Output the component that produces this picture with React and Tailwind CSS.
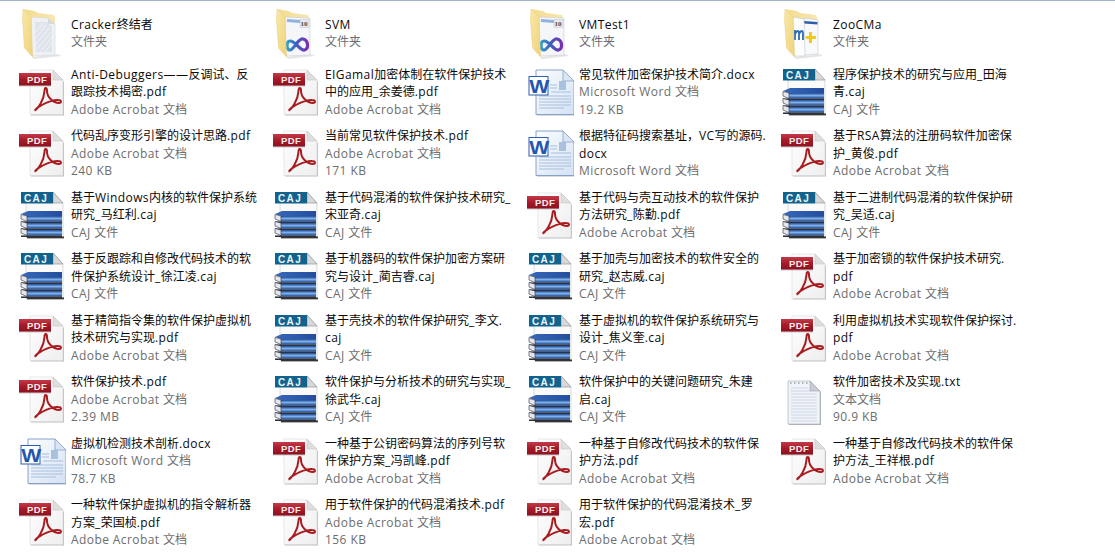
const PDF = "Adobe Acrobat 文档";
const CAJ = "CAJ 文件";
const WORD = "Microsoft Word 文档";

const rows = [
  [
    { icon: "folderPlain", name: ["Cracker终结者"], sub: ["文件夹"] },
    { icon: "folderVs", name: ["SVM"], sub: ["文件夹"] },
    { icon: "folderVs", name: ["VMTest1"], sub: ["文件夹"] },
    { icon: "folderZoo", name: ["ZooCMa"], sub: ["文件夹"] },
  ],
  [
    { icon: "pdf", name: ["Anti-Debuggers——反调试、反", "跟踪技术揭密.pdf"], sub: [PDF] },
    { icon: "pdf", name: ["EIGamal加密体制在软件保护技术", "中的应用_余姜德.pdf"], sub: [PDF] },
    { icon: "word", name: ["常见软件加密保护技术简介.docx"], sub: [WORD, "19.2 KB"] },
    { icon: "caj", name: ["程序保护技术的研究与应用_田海", "青.caj"], sub: [CAJ] },
  ],
  [
    { icon: "pdf", name: ["代码乱序变形引擎的设计思路.pdf"], sub: [PDF, "240 KB"] },
    { icon: "pdf", name: ["当前常见软件保护技术.pdf"], sub: [PDF, "171 KB"] },
    { icon: "word", name: ["根据特征码搜索基址，VC写的源码.", "docx"], sub: [WORD] },
    { icon: "pdf", name: ["基于RSA算法的注册码软件加密保", "护_黄俊.pdf"], sub: [PDF] },
  ],
  [
    { icon: "caj", name: ["基于Windows内核的软件保护系统", "研究_马红利.caj"], sub: [CAJ] },
    { icon: "caj", name: ["基于代码混淆的软件保护技术研究_", "宋亚奇.caj"], sub: [CAJ] },
    { icon: "pdf", name: ["基于代码与壳互动技术的软件保护", "方法研究_陈勤.pdf"], sub: [PDF] },
    { icon: "caj", name: ["基于二进制代码混淆的软件保护研", "究_吴适.caj"], sub: [CAJ] },
  ],
  [
    { icon: "caj", name: ["基于反跟踪和自修改代码技术的软", "件保护系统设计_徐江凌.caj"], sub: [CAJ] },
    { icon: "caj", name: ["基于机器码的软件保护加密方案研", "究与设计_蔺吉睿.caj"], sub: [CAJ] },
    { icon: "caj", name: ["基于加壳与加密技术的软件安全的", "研究_赵志威.caj"], sub: [CAJ] },
    { icon: "pdf", name: ["基于加密锁的软件保护技术研究.", "pdf"], sub: [PDF] },
  ],
  [
    { icon: "pdf", name: ["基于精简指令集的软件保护虚拟机", "技术研究与实现.pdf"], sub: [PDF] },
    { icon: "caj", name: ["基于壳技术的软件保护研究_李文.", "caj"], sub: [CAJ] },
    { icon: "caj", name: ["基于虚拟机的软件保护系统研究与", "设计_焦义奎.caj"], sub: [CAJ] },
    { icon: "pdf", name: ["利用虚拟机技术实现软件保护探讨.", "pdf"], sub: [PDF] },
  ],
  [
    { icon: "pdf", name: ["软件保护技术.pdf"], sub: [PDF, "2.39 MB"] },
    { icon: "caj", name: ["软件保护与分析技术的研究与实现_", "徐武华.caj"], sub: [CAJ] },
    { icon: "caj", name: ["软件保护中的关键问题研究_朱建", "启.caj"], sub: [CAJ] },
    { icon: "txt", name: ["软件加密技术及实现.txt"], sub: ["文本文档", "90.9 KB"] },
  ],
  [
    { icon: "word", name: ["虚拟机检测技术剖析.docx"], sub: [WORD, "78.7 KB"] },
    { icon: "pdf", name: ["一种基于公钥密码算法的序列号软", "件保护方案_冯凯峰.pdf"], sub: [PDF] },
    { icon: "pdf", name: ["一种基于自修改代码技术的软件保", "护方法.pdf"], sub: [PDF] },
    { icon: "pdf", name: ["一种基于自修改代码技术的软件保", "护方法_王祥根.pdf"], sub: [PDF] },
  ],
  [
    { icon: "pdf", name: ["一种软件保护虚拟机的指令解析器", "方案_荣国桢.pdf"], sub: [PDF] },
    { icon: "pdf", name: ["用于软件保护的代码混淆技术.pdf"], sub: [PDF, "156 KB"] },
    { icon: "pdf", name: ["用于软件保护的代码混淆技术_罗", "宏.pdf"], sub: [PDF] },
  ],
];

function FolderShell({ children }) {
  return (
    <svg width="48" height="50" viewBox="0 0 48 50" className="overflow-visible">
      <defs>
        <linearGradient id="fback" x1="0" y1="0" x2="1" y2="0">
          <stop offset="0" stopColor="#f3dc90" />
          <stop offset="1" stopColor="#f7e7ae" />
        </linearGradient>
        <linearGradient id="fflap" x1="0" y1="0" x2="1" y2="1">
          <stop offset="0" stopColor="#f8e8a8" />
          <stop offset="1" stopColor="#efd27a" />
        </linearGradient>
      </defs>
      <path d="M14 49 L40 46 L43 48 L16 51 Z" fill="#000" opacity="0.1" />
      <path d="M5 1 L17 3 L20 5 L36 7 L37 10 L37 20 L13 20 Z" fill="url(#fback)" />
      {children}
      <path d="M5 1 L13 9 L14.5 49 L6.5 40 L4.5 12 Z" fill="url(#fflap)" stroke="#e6cd80" strokeWidth="0.5" />
    </svg>
  );
}

function FolderPlain() {
  return (
    <FolderShell>
      <path d="M13 9 L30 10 L37 16 L37 47 L14 48 Z" fill="#f0f1f5" stroke="#d4d6dc" strokeWidth="0.6" />
      <path d="M17 14 L29 14 L34 19 L34 44 L18 44 Z" fill="#dfe3ec" />
      <path d="M18 42 L33 24 M22 44 L34 29 M27 44 L34 35 M18 36 L31 20 M18 30 L28 17 M18 24 L25 15" stroke="#f3f4f8" strokeWidth="1" />
      <path d="M30 10 L30 16 L37 16 Z" fill="#d8dae0" />
    </FolderShell>
  );
}

function FolderVs() {
  return (
    <FolderShell>
      <defs>
        <linearGradient id="vsinf" x1="0" y1="0" x2="1" y2="0">
          <stop offset="0" stopColor="#2fa0c8" />
          <stop offset="0.45" stopColor="#3f5fc0" />
          <stop offset="1" stopColor="#7a2fb0" />
        </linearGradient>
      </defs>
      <path d="M13 9 L38 10 L38 47 L14 48 Z" fill="#f5f6fa" stroke="#c8ccd4" strokeWidth="0.6" />
      <path d="M15 11 L28 12 L28 15 L15 14 Z" fill="#8fb2de" />
      <rect x="28" y="11.5" width="9" height="8" fill="#e6e8ee" stroke="#b8bcc4" strokeWidth="0.4" />
      <text x="28.6" y="18.2" fontSize="7" fontWeight="700" fill="#4a4a4a" fontFamily="'Liberation Serif',serif">10</text>
      <path d="M18 33 C24 33 28 43 32.5 42 C37 41 36.5 32 31 31 C26 30 22 42 18 42 C14 42 14 33 18 33 Z" fill="none" stroke="url(#vsinf)" strokeWidth="3.2" />
    </FolderShell>
  );
}

function FolderZoo() {
  return (
    <FolderShell>
      <path d="M24 10 L38 12 L38 46 L24 47 Z" fill="#f8f9fb" stroke="#c6c9d0" strokeWidth="0.6" />
      <path d="M24 13 L37.5 14 L37.5 16.5 L24 15.5 Z" fill="#2c5fa8" />
      <path d="M13 9 L24 11 L25 48 L14 48 Z" fill="#fdfdfe" stroke="#c6c9d0" strokeWidth="0.6" />
      <path d="M15 22 C15 30 15 30 15 32 M15 26 C17 22 19 22 19 26 L19 32 M19 26 C21 22 23 22 23 26 L23 32" fill="none" stroke="#2d6db5" strokeWidth="1.8" />
      <path d="M30.5 24 L30.5 35 M25.5 29.5 L36 29.5" stroke="#f5c91e" strokeWidth="3" />
    </FolderShell>
  );
}

function PdfIcon() {
  return (
    <svg width="48" height="48" viewBox="0 0 48 48">
      <defs>
        <linearGradient id="ppage" x1="0" y1="0" x2="1" y2="1">
          <stop offset="0" stopColor="#ffffff" />
          <stop offset="1" stopColor="#eeeeee" />
        </linearGradient>
        <linearGradient id="pbanner" x1="0" y1="0" x2="0" y2="1">
          <stop offset="0" stopColor="#c43a48" />
          <stop offset="0.5" stopColor="#a61a2a" />
          <stop offset="1" stopColor="#8e1020" />
        </linearGradient>
      </defs>
      <path d="M13 4 L35 3 L46 14 L46 47.5 L13 47.5 Z" fill="#bdbdbd" />
      <path d="M12 2 L35 2 L45 12 L45 46.5 L12 46.5 Z" fill="url(#ppage)" stroke="#d8d8d8" strokeWidth="0.6" />
      <path d="M35 2 L35 12 L45 12 Z" fill="#dedede" stroke="#c6c6c6" strokeWidth="0.6" />
      <rect x="1" y="6" width="32" height="12.5" fill="#000" opacity="0.2" />
      <rect x="1" y="5" width="32" height="12.5" fill="url(#pbanner)" />
      <text x="9" y="14.8" fontSize="9.5" fontWeight="700" fill="#f7efee" letterSpacing="0.4" fontFamily="'Liberation Sans Narrow','Liberation Sans',sans-serif">PDF</text>
      <path d="M16.5 42.5 C20 41 26 32 26.5 23 C26.5 19 29 19 29 23 C29 29 35 35 41 35 C44 35 43.5 32 40 32 C34 31.5 22 37 17.5 41.5" fill="none" stroke="#a81b1f" strokeWidth="2" strokeLinejoin="round" />
    </svg>
  );
}

function WordIcon() {
  return (
    <svg width="48" height="48" viewBox="0 0 48 48">
      <defs>
        <linearGradient id="wpage" x1="0" y1="0" x2="1" y2="1">
          <stop offset="0" stopColor="#fcfdff" />
          <stop offset="1" stopColor="#d4e2f4" />
        </linearGradient>
      </defs>
      <path d="M11 5 L37 3 L48.5 14 L48.5 47.5 L11 47.5 Z" fill="#b4b8be" />
      <path d="M10 2 L37 2 L48 13 L48 46.5 L10 46.5 Z" fill="url(#wpage)" stroke="#86a2ca" strokeWidth="1" />
      <path d="M37 2 L37 13 L48 13 Z" fill="#dbe6f4" stroke="#86a2ca" strokeWidth="0.8" />
      <rect x="33" y="13" width="7" height="9" fill="#a9c0de" />
      <path d="M24 17 L31 17 M24 20 L31 20 M25 24 L45 24 M13 28 L45 28 M13 31 L45 31 M13 34 L45 34 M13 37 L45 37 M13 40 L38 40" stroke="#a8bfdd" strokeWidth="1" />
      <rect x="3" y="8.5" width="19" height="18.5" fill="#fff" stroke="#2f5fb0" strokeWidth="1" />
      <text x="3.2" y="24.5" fontSize="19" fontWeight="700" fill="#2356ae" fontFamily="'Liberation Sans',sans-serif" textLength="20" lengthAdjust="spacingAndGlyphs">W</text>
    </svg>
  );
}

function CajBook({ y }) {
  return (
    <g>
      <rect x="9" y={y} width="35" height="5.5" fill="url(#cajb)" />
      <path d={`M3 ${y - 1.5} L9 ${y} L9 ${y + 5.5} L3 ${y + 3} Z`} fill="#e4e7ee" stroke="#2a2f3a" strokeWidth="0.6" />
      <rect x="3" y={y + 5.5} width="41" height="1.4" fill="#161c2c" />
    </g>
  );
}

function CajIcon() {
  return (
    <svg width="48" height="48" viewBox="0 0 48 48">
      <defs>
        <linearGradient id="cajb" x1="0" y1="0" x2="0" y2="1">
          <stop offset="0" stopColor="#1d4a94" />
          <stop offset="0.45" stopColor="#7fb0ea" />
          <stop offset="1" stopColor="#1a4690" />
        </linearGradient>
        <linearGradient id="cajt" x1="0" y1="0" x2="1" y2="0">
          <stop offset="0" stopColor="#3868ba" />
          <stop offset="1" stopColor="#244d9c" />
        </linearGradient>
      </defs>
      <path d="M35 1 L45 12 L45 47 L8 47 L8 10 Z" fill="#fafafa" stroke="#c4c4c4" strokeWidth="0.6" />
      <path d="M35 1 L35 12 L45 12 Z" fill="#d8d8d8" stroke="#8a8a8a" strokeWidth="0.6" />
      <rect x="3" y="1" width="32" height="11.5" fill="#12628e" />
      <text x="6" y="10.5" fontSize="10" fontWeight="700" fill="#eef5f8" letterSpacing="1.4" fontFamily="'Liberation Sans',sans-serif">CAJ</text>
      <path d="M3 23 L10 20 L44 20 L44 25 L9 25 Z" fill="url(#cajt)" />
      <CajBook y={25} />
      <CajBook y={32} />
      <CajBook y={39} />
      <rect x="9" y="45.5" width="37" height="1.8" fill="#333" />
    </svg>
  );
}

function TxtIcon() {
  return (
    <svg width="48" height="48" viewBox="0 0 48 48" className="overflow-visible">
      <path d="M9 7 L31 7 L41 17 L41 50 L9 50 Z" fill="#a8adb5" />
      <path d="M8 6 L30 6 L40 16 L40 49 L8 49 Z" fill="#f0f3f7" stroke="#b6bcc6" strokeWidth="0.8" />
      <path d="M30 6 L30 16 L40 16 Z" fill="#c8cdd5" stroke="#9ea4ae" strokeWidth="0.6" />
      <path d="M10 8 L28 8" stroke="#9aa0aa" strokeWidth="1.4" strokeDasharray="1.5 2.5" />
      <path d="M11 19 L37 19 M11 22 L37 22 M11 25 L37 25 M11 28 L37 28 M11 31 L37 31 M11 34 L37 34 M11 37 L37 37 M11 40 L37 40 M11 43 L37 43 M11 46 L37 46 M11 13 L28 13 M11 16 L30 16" stroke="#cdd6e6" strokeWidth="1" />
    </svg>
  );
}

const icons = {
  folderPlain: FolderPlain,
  folderVs: FolderVs,
  folderZoo: FolderZoo,
  pdf: PdfIcon,
  word: WordIcon,
  caj: CajIcon,
  txt: TxtIcon,
};

// latin runs in the reference are a bit wider than Open Sans, CJK stays at 12px
function Line({ text }) {
  const parts = text.split(/([\u3000-\u9fff\uff00-\uffef]+)/).filter(Boolean);
  return (
    <div>
      {parts.map((part, i) =>
        /[\u3000-\u9fff\uff00-\uffef]/.test(part) ? (
          <span key={i}>{part}</span>
        ) : (
          <span key={i} className="tracking-[0.42px]">{part}</span>
        )
      )}
    </div>
  );
}

function Item({ item }) {
  const Icon = icons[item.icon];
  const isFolder = item.sub[0] === "文件夹";
  return (
    <div className={isFolder ? "flex items-center pb-[1px]" : "flex items-center"}>
      <div className={isFolder ? "w-[48px] h-[48px] shrink-0 mb-[2px]" : "w-[48px] h-[48px] shrink-0"}>
        <Icon />
      </div>
      <div className="ml-[5px] text-[12px] leading-[17.5px] whitespace-nowrap">
        {item.name.map((line) => (
          <div key={line} className="text-[#0a0a0a]">
            <Line text={line} />
          </div>
        ))}
        {item.sub.map((line) => (
          <div key={line} className="text-[#6d6d6d]">
            <Line text={line} />
          </div>
        ))}
      </div>
    </div>
  );
}

export default function App() {
  return (
    <div
      className="w-[1115px] h-[553px] overflow-hidden bg-white border-t border-[#a3b4cf] pt-[5px] pl-[18px]"
      style={{ fontFamily: '"Open Sans","Noto Sans CJK SC",sans-serif' }}
    >
      <div className="grid grid-cols-[repeat(4,254px)] grid-rows-[55px] auto-rows-[61.5px]">
        {rows.flat().map((item) => (
          <Item key={item.name[0]} item={item} />
        ))}
      </div>
    </div>
  );
}
